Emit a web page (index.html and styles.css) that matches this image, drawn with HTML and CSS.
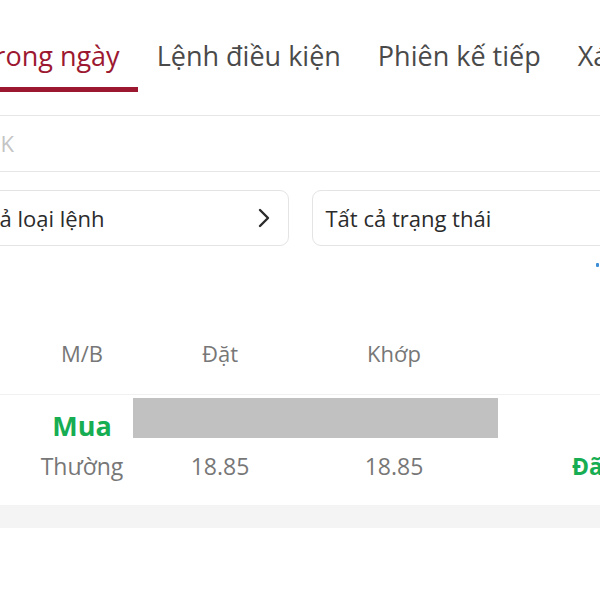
FILE: index.html
```
<!DOCTYPE html>
<html lang="vi">
<head>
    <meta charset="UTF-8">
    <meta name="viewport" content="width=device-width, initial-scale=1.0">
    <title>Sổ lệnh</title>
    <link rel="stylesheet" href="styles.css">
</head>
<body>
    <div class="screen">
        <!-- Order book tabs -->
        <div class="tabs">
            <div class="tab active">Trong ngày</div>
            <div class="tab">Lệnh điều kiện</div>
            <div class="tab">Phiên kế tiếp</div>
            <div class="tab">Xác nhận lệnh</div>
        </div>

        <div class="search">Mã CK</div>

        <div class="filters">
            <div class="filter">
                <span>Tất cả loại lệnh</span>
                <svg class="chevron" width="14" height="20" viewBox="0 0 14 20">
                    <path d="M3 2 L11 10 L3 18" fill="none" stroke="#2b2b2b" stroke-width="2.4" stroke-linecap="round" stroke-linejoin="round"/>
                </svg>
            </div>
            <div class="filter">
                <span>Tất cả trạng thái</span>
                <svg class="chevron" width="14" height="20" viewBox="0 0 14 20">
                    <path d="M3 2 L11 10 L3 18" fill="none" stroke="#2b2b2b" stroke-width="2.4" stroke-linecap="round" stroke-linejoin="round"/>
                </svg>
            </div>
        </div>

        <div class="loader"><span class="dot"></span></div>

        <div class="table">
            <div class="row head">
                <div class="cell"></div>
                <div class="cell">M/B</div>
                <div class="cell">Đặt</div>
                <div class="cell">Khớp</div>
                <div class="cell"></div>
            </div>
            <div class="row body">
                <div class="cell"></div>
                <div class="cell">
                    <div class="top buy">Mua</div>
                    <div class="sub">Thường</div>
                </div>
                <div class="cell">
                    <div class="top">1,000</div>
                    <div class="sub">18.85</div>
                </div>
                <div class="cell">
                    <div class="top">1,000</div>
                    <div class="sub">18.85</div>
                </div>
                <div class="cell left">
                    <div class="top"></div>
                    <div class="sub status">Đã khớp</div>
                </div>
                <div class="mask"></div>
            </div>
            <div class="divider"></div>
        </div>
    </div>
</body>
</html>
```
FILE: styles.css
```
html, body {
    margin: 0;
    padding: 0;
    overflow: hidden;
    background: #fff;
}

body {
    font-family: "Open Sans", "Noto Sans", sans-serif;
    color: #333;
}

.screen {
    width: 750px;
    margin-left: -75px; /* the shot only shows the middle of the screen */
}

/* tabs */
.tabs {
    display: flex;
    height: 116px;
    padding-left: 36px;
    border-bottom: 1px solid #e6e6e6;
    box-sizing: border-box;
    white-space: nowrap;
}

.tab {
    height: 92px;
    padding: 37px 18.5px 0;
    box-sizing: border-box;
    font-size: 27px;
    line-height: 37px;
    color: #4a4a4a;
}

.tab.active {
    color: #9c1830;
    border-bottom: 5px solid #9c1830;
}

/* search */
.search {
    height: 56px;
    padding-left: 24px;
    border-bottom: 1px solid #e6e6e6;
    box-sizing: border-box;
    font-size: 22px;
    line-height: 54px;
    color: #c4c4c4;
}

/* filters */
.filters {
    display: flex;
    gap: 23px;
    padding: 18px 12px 0;
}

.filter {
    flex: 1;
    height: 56px;
    display: flex;
    align-items: center;
    justify-content: space-between;
    padding: 0 17px 0 13px;
    border: 1px solid #e4e4e4;
    border-radius: 9px;
    box-sizing: border-box;
    font-size: 22px;
    color: #2b2b2b;
    white-space: nowrap;
}

.loader {
    height: 54px;
    position: relative;
}

.dot {
    position: absolute;
    left: 671px;
    top: 17px;
    width: 3px;
    height: 4px;
    background: #3d8fd6;
    border-radius: 1px;
}

/* table */
.row {
    display: grid;
    grid-template-columns: 95px 124px 152px 196px 183px;
    text-align: center;
}

.row.head {
    height: 95px;
    align-items: center;
    border-bottom: 1px solid #f1f1f1;
    font-size: 22px;
    color: #777;
    padding-top: 12px;
    box-sizing: border-box;
}

.row.body {
    position: relative;
    height: 110px;
    padding-top: 11px;
    box-sizing: border-box;
}

.cell.left {
    text-align: left;
    padding-left: 80px;
    white-space: nowrap;
}

.top {
    height: 40px;
    font-size: 24px;
    line-height: 40px;
    color: #555;
}

.top.buy {
    font-size: 27px;
    font-weight: bold;
    color: #17ad52;
}

.sub {
    font-size: 23px;
    line-height: 40px;
    color: #777;
}

.sub.status {
    font-weight: bold;
    color: #17ad52;
}

.mask {
    position: absolute;
    left: 208px;
    top: 3px;
    width: 365px;
    height: 40px;
    background: #c1c1c1;
}

.divider {
    height: 23px;
    background: #f4f4f4;
}
```
